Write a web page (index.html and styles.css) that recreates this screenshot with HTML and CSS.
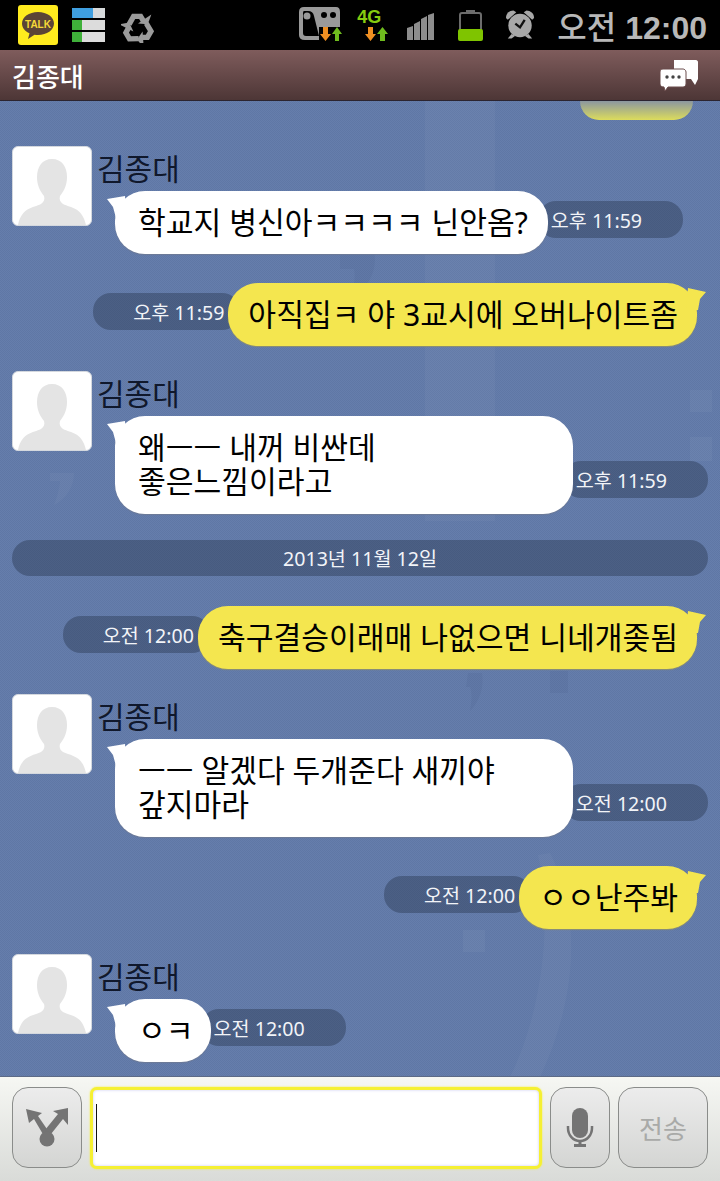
FILE: index.html
```html
<!DOCTYPE html>
<html lang="ko">
<head>
    <meta charset="UTF-8">
    <meta name="viewport" content="width=device-width, initial-scale=1.0">
    <title>김종대</title>
    <link rel="stylesheet" href="styles.css">
</head>
<body>
    <div class="phone">
        <!-- status bar -->
        <div class="status-bar">
            <div class="talk-icon">
                <svg width="40" height="40" viewBox="0 0 40 40">
                    <path d="M20 7c-9 0-16 5-16 11.500 0 4.300 3 7.800 7.500 9.800L10 34l6.500-4.300c1.100.2 2.300.3 3.500.3 9 0 16-5 16-11.500S29 7 20 7z" fill="#5b4436"/>
                    <text x="20" y="23" class="talk-text">TALK</text>
                </svg>
            </div>
            <svg class="stack-icon" width="33" height="34" viewBox="0 0 33 34">
                <rect x="0" y="0" width="33" height="10" fill="#d6dadc"/>
                <rect x="0" y="0" width="21" height="10" fill="#3f9fe0"/>
                <rect x="0" y="12" width="33" height="10" fill="#dcdcdc"/>
                <rect x="0" y="12" width="10" height="10" fill="#3fb03a"/>
                <rect x="0" y="24" width="33" height="10" fill="#dcdcdc"/>
                <rect x="0" y="24" width="10" height="10" fill="#3fb03a"/>
            </svg>
            <svg class="recycle-icon" width="34" height="32" viewBox="0 0 36 36">
                <g id="recycle-arm">
                    <path d="M8 15l5-9h8l3 5" fill="none" stroke="#9b9b9b" stroke-width="6"/>
                    <path d="M18 14l11 1 4-11z" fill="#9b9b9b"/>
                </g>
                <use href="#recycle-arm" transform="rotate(120 18 20)"/>
                <use href="#recycle-arm" transform="rotate(240 18 20)"/>
            </svg>
            <div class="status-right">
                <svg class="data-icon" width="44" height="34" viewBox="0 0 44 34">
                    <path d="M5 0h32q4 0 4 5v15H20v13H6q-6 0-6-5V5q0-5 5-5z" fill="#9a9a9a"/>
                    <path d="M5 4h4q5 0 6 5l5 20H7q-3 0-3-3V6q0-2 1-2z" fill="#000"/>
                    <circle cx="8" cy="9" r="3.500" fill="#9a9a9a"/>
                    <circle cx="25" cy="8" r="3" fill="#000"/>
                    <circle cx="34" cy="8" r="3" fill="#000"/>
                    <path d="M24 20h5v7h3l-5.500 7-5.500-7h3z" fill="#ef8f22"/>
                    <path d="M36 34v-7h-3l5-7 5 7h-3v7z" fill="#6fbb1e"/>
                </svg>
                <div class="net-icon">
                    <span class="net-label">4G</span>
                    <svg width="24" height="14" viewBox="0 0 24 14">
                        <path d="M3 0h5v7h3l-5.500 7L0 7h3z" fill="#ef8f22"/>
                        <path d="M15 14V7h-3l5.500-7L23 7h-3v7z" fill="#6fbb1e"/>
                    </svg>
                </div>
                <svg class="signal-icon" width="27" height="27" viewBox="0 0 27 27" fill="#8d8d8d">
                    <path d="M0 15l6-2v14H0zM7 11l6-3v19H7zM14 6l6-3v24h-6zM21 2l6-2v27h-6z"/>
                </svg>
                <svg class="battery-icon" width="25" height="31" viewBox="0 0 25 31">
                    <rect x="8" y="0" width="9" height="3" fill="#6c6c6c"/>
                    <rect x="2" y="3" width="21" height="27" rx="2" fill="none" stroke="#6c6c6c" stroke-width="2"/>
                    <rect x="0" y="19" width="25" height="12" rx="2" fill="#7fc400"/>
                </svg>
                <svg class="alarm-icon" width="30" height="31" viewBox="0 0 32 32">
                    <path d="M1 9c0-5 4-8 8-8l3 2-9 8z" fill="#a8a8a8"/>
                    <path d="M31 9c0-5-4-8-8-8l-3 2 9 8z" fill="#a8a8a8"/>
                    <path d="M7 26l-4 5h4l4-3zM25 26l4 5h-4l-4-3z" fill="#a8a8a8"/>
                    <circle cx="16" cy="17" r="12.500" fill="#a8a8a8"/>
                    <path d="M21 11l-5 8-5-4" fill="none" stroke="#111" stroke-width="2.500"/>
                </svg>
                <span class="clock">오전 <b>12:00</b></span>
            </div>
        </div>

        <!-- title bar -->
        <div class="title-bar">
            <span class="title">김종대</span>
            <svg width="38" height="32" viewBox="0 0 38 32">
                <path d="M14 1h22c1 0 2 1 2 2v17l-3 6-4-6H14z" fill="#fff"/>
                <path d="M3 10h20c1 0 3 1 3 3v12c0 2-2 3-3 3H8l-3 4-1-4c-2 0-4-1-4-3V13c0-2 1-3 3-3z" fill="#fff" stroke="#6a4c4c" stroke-width="1"/>
                <circle cx="7" cy="18" r="1.700" fill="#444"/>
                <circle cx="13" cy="18" r="1.700" fill="#444"/>
                <circle cx="19" cy="18" r="1.700" fill="#444"/>
            </svg>
        </div>

        <!-- chat -->
        <div class="chat">
            <!-- faint wallpaper marks -->
            <svg class="wallpaper" width="720" height="976" viewBox="0 0 720 976">
                <g fill="#fff" opacity="0.035">
                    <rect x="425" y="0" width="70" height="420"/>
                    <rect x="690" y="289" width="22" height="22"/>
                    <rect x="690" y="336" width="22" height="24"/>
                    <path d="M50 372h24c0 14-8 26-20 32 4-10 6-20 6-24h-10z"/>
                    <rect x="463" y="829" width="22" height="22"/>
                    <path d="M550 752c26 50 34 130-10 224h-30c30-60 44-150 28-222z"/>
                </g>
                <g fill="#1a2a50" opacity="0.05">
                    <path d="M340 150h34c4 20-6 38-24 46 4-10 6-20 4-28h-14z"/>
                    <rect x="550" y="570" width="18" height="22"/>
                    <path d="M468 572h14c2 14-2 28-12 38 2-10 2-20 0-24h-4z"/>
                </g>
            </svg>

            <div class="clipped-bubble"></div>

            <div class="row in first">
                <div class="avatar">
                    <svg width="78" height="78" viewBox="0 0 78 78"><path d="M39 12c-10 0-15 8-15 18 0 8 3 14 7 19 1 3 0 6-3 8-8 4-19 3-23 21h68c-4-18-15-17-23-21-3-2-4-5-3-8 4-5 7-11 7-19 0-10-5-18-15-18z" fill="#e4e4e4"/></svg>
                </div>
                <div class="body">
                    <div class="name">김종대</div>
                    <div class="line">
                        <div class="bubble white">학교지 병신아ㅋㅋㅋㅋ 닌안옴?</div>
                        <div class="time">오후 11:59</div>
                    </div>
                </div>
            </div>

            <div class="row out">
                <div class="time">오후 11:59</div>
                <div class="bubble yellow">아직집ㅋ 야 3교시에 오버나이트좀</div>
            </div>

            <div class="row in">
                <div class="avatar">
                    <svg width="78" height="78" viewBox="0 0 78 78"><path d="M39 12c-10 0-15 8-15 18 0 8 3 14 7 19 1 3 0 6-3 8-8 4-19 3-23 21h68c-4-18-15-17-23-21-3-2-4-5-3-8 4-5 7-11 7-19 0-10-5-18-15-18z" fill="#e4e4e4"/></svg>
                </div>
                <div class="body">
                    <div class="name">김종대</div>
                    <div class="line">
                        <div class="bubble white wide">왜ㅡㅡ 내꺼 비싼데<br>좋은느낌이라고</div>
                        <div class="time">오후 11:59</div>
                    </div>
                </div>
            </div>

            <div class="date-pill">2013년 11월 12일</div>

            <div class="row out after-date">
                <div class="time">오전 12:00</div>
                <div class="bubble yellow">축구결승이래매 나없으면 니네개좆됨</div>
            </div>

            <div class="row in">
                <div class="avatar">
                    <svg width="78" height="78" viewBox="0 0 78 78"><path d="M39 12c-10 0-15 8-15 18 0 8 3 14 7 19 1 3 0 6-3 8-8 4-19 3-23 21h68c-4-18-15-17-23-21-3-2-4-5-3-8 4-5 7-11 7-19 0-10-5-18-15-18z" fill="#e4e4e4"/></svg>
                </div>
                <div class="body">
                    <div class="name">김종대</div>
                    <div class="line">
                        <div class="bubble white wide">ㅡㅡ 알겠다 두개준다 새끼야<br>갚지마라</div>
                        <div class="time">오전 12:00</div>
                    </div>
                </div>
            </div>

            <div class="row out">
                <div class="time">오전 12:00</div>
                <div class="bubble yellow">ㅇㅇ난주봐</div>
            </div>

            <div class="row in">
                <div class="avatar">
                    <svg width="78" height="78" viewBox="0 0 78 78"><path d="M39 12c-10 0-15 8-15 18 0 8 3 14 7 19 1 3 0 6-3 8-8 4-19 3-23 21h68c-4-18-15-17-23-21-3-2-4-5-3-8 4-5 7-11 7-19 0-10-5-18-15-18z" fill="#e4e4e4"/></svg>
                </div>
                <div class="body">
                    <div class="name">김종대</div>
                    <div class="line">
                        <div class="bubble white short">ㅇㅋ</div>
                        <div class="time">오전 12:00</div>
                    </div>
                </div>
            </div>
        </div>

        <!-- input -->
        <div class="composer">
            <button class="btn btn-attach">
                <svg width="44" height="44" viewBox="0 0 44 44" fill="#747474">
                    <path d="M1 3l16 4-4 3 11 16-5 4L9 13l-5 4z"/>
                    <path d="M43 2v17l-5-6-12 15-6-4 13-16-5-3z"/>
                    <circle cx="22" cy="33" r="7.500"/>
                </svg>
            </button>
            <div class="input"><span class="caret"></span></div>
            <button class="btn btn-mic">
                <svg width="30" height="44" viewBox="0 0 30 44">
                    <rect x="7" y="2" width="16" height="30" rx="8" fill="#747474"/>
                    <path d="M3 20v2c0 7 5 13 12 13s12-6 12-13v-2" fill="none" stroke="#747474" stroke-width="2.500"/>
                    <rect x="13.500" y="34" width="3" height="5" fill="#747474"/>
                    <rect x="9" y="38" width="12" height="3" fill="#747474"/>
                </svg>
            </button>
            <button class="btn btn-send">전송</button>
        </div>
    </div>
</body>
</html>
```

FILE: styles.css
```css
* {
    box-sizing: border-box;
}

body {
    margin: 0;
    background-color: #000;
    font-family: "Noto Sans", "Noto Sans CJK KR", sans-serif;
}

.phone {
    width: 720px;
    height: 1181px;
    display: flex;
    flex-direction: column;
    overflow: hidden;
}

/* status bar */
.status-bar {
    height: 50px;
    flex: none;
    background-color: #000;
    display: flex;
    align-items: flex-start;
    padding: 0 13px 0 18px;
}

.talk-icon {
    width: 40px;
    height: 40px;
    margin-top: 5px;
    border-radius: 3px;
    background-color: #ffeb1e;
}

.talk-text {
    font-family: "Liberation Sans", sans-serif;
    font-size: 10px;
    font-weight: bold;
    fill: #f5d838;
    text-anchor: middle;
}

.stack-icon {
    margin-left: 14px;
    margin-top: 8px;
}

.recycle-icon {
    margin-left: 16px;
    margin-top: 11px;
}

.status-right {
    margin-left: auto;
    display: flex;
    align-items: flex-start;
}

.data-icon {
    margin-top: 7px;
}

.net-icon {
    width: 32px;
    margin-left: 14px;
    margin-top: 8px;
    display: flex;
    flex-direction: column;
    align-items: flex-end;
}

.net-label {
    align-self: flex-start;
    font-family: "Liberation Sans", sans-serif;
    font-size: 18px;
    font-weight: bold;
    line-height: 19px;
    color: #86cc10;
}

.signal-icon {
    margin-left: 18px;
    margin-top: 13px;
}

.battery-icon {
    margin-left: 24px;
    margin-top: 10px;
}

.alarm-icon {
    margin-left: 22px;
    margin-top: 9px;
}

.clock {
    margin-left: 22px;
    font-family: "Noto Sans CJK KR", sans-serif;
    font-size: 32px;
    font-weight: 500;
    line-height: 50px;
    color: #b8b8b8;
    white-space: nowrap;
}

.clock b {
    font-family: "Liberation Sans", sans-serif;
    font-size: 32px;
}

/* title bar */
.title-bar {
    height: 51px;
    flex: none;
    display: flex;
    align-items: center;
    justify-content: space-between;
    padding: 0 22px 0 12px;
    background: linear-gradient(#7f5c5c, #4d3636);
    border-bottom: 1px solid #2b2430;
}

.title {
    font-family: "Noto Sans CJK KR", sans-serif;
    font-size: 26px;
    font-weight: 500;
    color: #fff;
}

/* chat area */
.chat {
    position: relative;
    isolation: isolate;
    flex: 1;
    padding: 0 12px;
    overflow: hidden;
    background-color: #627aa8;
    background-image: repeating-conic-gradient(#5f77a5 0 25%, #667eac 0 50%);
    background-size: 2px 2px;
}

.wallpaper {
    position: absolute;
    top: 0;
    left: 0;
    z-index: -1;
}

.clipped-bubble {
    width: 113px;
    height: 19px;
    margin-left: 568px;
    border-radius: 0 0 22px 22px;
    background: linear-gradient(#8b97a0, #dcdc5c);
}

.row {
    display: flex;
    margin-top: 25px;
}

.row.first {
    margin-top: 26px;
}

.row.out {
    margin-top: 29px;
    justify-content: flex-end;
    padding-right: 11px;
}

.row.after-date {
    margin-top: 30px;
}

.avatar {
    width: 80px;
    height: 80px;
    flex: none;
    border: 1px solid #d4d8de;
    border-radius: 6px;
    background-color: #fff;
}

.avatar svg {
    display: block;
}

.body {
    margin-left: 5px;
    flex: 1;
    min-width: 0;
}

.name {
    height: 45px;
    font-size: 30px;
    line-height: 46px;
    color: #10182c;
    white-space: nowrap;
}

.line {
    display: flex;
    align-items: flex-end;
    padding-left: 18px;
}

.bubble {
    position: relative;
    z-index: 1;
    padding: 14px 20px 14px 23px;
    border-radius: 30px;
    font-size: 30.200px;
    line-height: 35px;
    color: #000;
    white-space: nowrap;
}

.bubble::before {
    content: "";
    position: absolute;
    top: 2px;
    width: 20px;
    height: 26px;
}

.white {
    background-color: #fff;
    box-shadow: 0 1px 1px #6d7a96;
}

.white::before {
    left: -8px;
    background-color: #fff;
    clip-path: polygon(0 6px, 18px 3px, 20px 25px, 9px 25px, 6px 14px);
}

.wide {
    width: 458px;
    padding-top: 15px;
    padding-bottom: 15px;
    line-height: 34px;
}

.short {
    padding-right: 17px;
}

.yellow {
    padding: 14px 19px 14px 20px;
    background-color: #f4e64f;
    box-shadow: 0 1px 1px #8d8f72;
}

.yellow::before {
    right: -9px;
    background-color: #f4e64f;
    clip-path: polygon(0 25px, 2px 3px, 20px 7px, 14px 14px, 12px 25px);
}

.time {
    flex: none;
    height: 37px;
    margin-bottom: 16px;
    margin-left: -10px;
    padding: 0 41px 0 13px;
    border-radius: 18px;
    background-color: rgba(30, 40, 60, 0.35);
    font-size: 19.600px;
    line-height: 39px;
    color: #f2f4f8;
    white-space: nowrap;
}

.out .time {
    margin-top: 10px;
    margin-bottom: 0;
    margin-left: 0;
    margin-right: -12px;
    padding: 0 16px 0 40px;
}

.date-pill {
    height: 36px;
    margin-top: 26px;
    border-radius: 18px;
    background-color: rgba(30, 40, 60, 0.35);
    font-size: 19.600px;
    line-height: 38px;
    text-align: center;
    color: #f2f4f8;
}

/* input row */
.composer {
    height: 105px;
    flex: none;
    display: flex;
    align-items: flex-start;
    padding: 10px 0 0 12px;
    background: linear-gradient(#f6f7f3, #d9dbd8);
    border-top: 1px solid #5c6a86;
}

.btn {
    height: 81px;
    padding: 0;
    display: flex;
    align-items: center;
    justify-content: center;
    border: 1px solid #8a8c8a;
    border-radius: 16px;
    background: linear-gradient(#ececec, #d4d5d3);
}

.btn-attach {
    width: 70px;
}

.input {
    width: 452px;
    height: 82px;
    margin-left: 8px;
    padding: 14px 0 0 3px;
    border: 3px solid #f5f033;
    border-radius: 7px;
    background-color: #fff;
    box-shadow: inset 0 0 3px #c8c8f0, 0 0 2px #f5f033;
}

.caret {
    display: block;
    width: 1px;
    height: 48px;
    background-color: #111;
}

.btn-mic {
    width: 60px;
    margin-left: 8px;
}

.btn-send {
    width: 90px;
    margin-left: 8px;
    font-family: "Noto Sans CJK KR", sans-serif;
    font-size: 26px;
    color: #a9aaa8;
}
```
